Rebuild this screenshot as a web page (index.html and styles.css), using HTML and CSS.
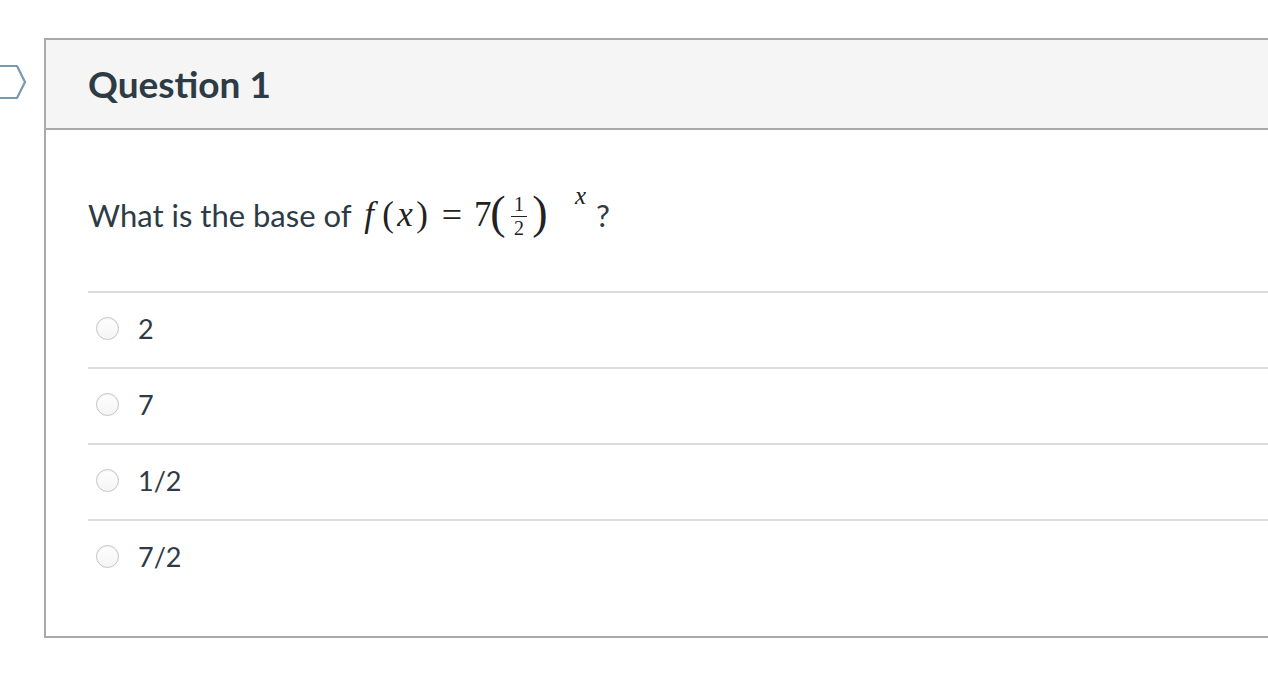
FILE: index.html
```html
<!DOCTYPE html>
<html>
<head>
<meta charset="utf-8">
<link rel="stylesheet" href="styles.css">
</head>
<body>
<div class="page">
  <div class="gutter">
    <svg class="flag" width="30" height="36" viewBox="0 0 30 36">
      <path d="M-4 2 H17 L25 18 L17 34 H-4" fill="none" stroke="#7a97b0" stroke-width="2.2" stroke-linejoin="round"/>
    </svg>
  </div>
  <div class="card">
    <div class="card-header">
      <h2 class="title">Question 1</h2>
    </div>
    <div class="card-body">
      <p class="question"><span class="qtext">What is the base of</span><span class="math"><span class="m mi f">f</span><span class="m lp">(</span><span class="m mi x">x</span><span class="m rp">)</span><span class="m eq">=</span><span class="m seven">7</span><span class="m bigp">(</span><span class="m frac"><span class="num">1</span><span class="den">2</span></span><span class="m bigp">)</span><span class="m sup">x</span></span><span class="qmark">?</span></p>
      <ul class="answers">
        <li class="answer"><span class="radio"></span><span class="label">2</span></li>
        <li class="answer"><span class="radio"></span><span class="label">7</span></li>
        <li class="answer"><span class="radio"></span><span class="label">1/2</span></li>
        <li class="answer"><span class="radio"></span><span class="label">7/2</span></li>
      </ul>
    </div>
  </div>
</div>
</body>
</html>
```

FILE: styles.css
```css
html, body {
  margin: 0;
  padding: 0;
  background: #ffffff;
}
body {
  font-family: Lato, "Liberation Sans", sans-serif;
  color: #2d3b45;
  overflow: hidden;
}
.page {
  display: flex;
  align-items: flex-start;
  width: 1268px;
}
.gutter {
  width: 44px;
  flex: none;
  padding-top: 64px;
}
.flag {
  display: block;
}
.card {
  flex: 1;
  margin-top: 38px;
  border: 2px solid #aaaaaa;
  border-right: none;
}
.card-header {
  height: 88px;
  background: #f5f5f5;
  border-bottom: 2px solid #aaaaaa;
  display: flex;
  align-items: center;
  padding-left: 42px;
}
.title {
  margin: 0;
  font-size: 37px;
  font-weight: 700;
  color: #2d3b45;
  line-height: 1;
  position: relative;
  top: -1px;
}
.card-body {
  padding: 63px 0 41px 42px;
}
.question {
  margin: 0;
  font-size: 31px;
  line-height: 44px;
  height: 98px;
  display: flex;
  align-items: flex-start;
  white-space: nowrap;
}
.qtext {
  width: 270px;
}
.math {
  font-family: "Liberation Serif", "DejaVu Serif", serif;
  font-size: 35px;
  display: flex;
  align-items: center;
  height: 44px;
  color: #222222;
}
.m {
  display: block;
  text-align: center;
  flex: none;
}
.mi {
  font-style: italic;
}
.f {
  width: 22px;
}
.lp {
  width: 16px;
}
.x {
  width: 18px;
}
.rp {
  width: 16px;
}
.eq {
  width: 44px;
  font-size: 36px;
}
.seven {
  width: 16px;
}
.bigp {
  width: 16px;
  font-size: 46px;
  line-height: 50px;
  position: relative;
  top: -2px;
}
.frac {
  width: 26px;
  display: flex;
  flex-direction: column;
  align-items: center;
  font-size: 20px;
  line-height: 23px;
  position: relative;
  top: 1px;
}
.num {
  border-bottom: 1px solid #222222;
  padding: 0 3px;
}
.sup {
  width: 40px;
  text-align: right;
  padding-right: 2px;
  box-sizing: border-box;
  font-style: italic;
  font-size: 25px;
  align-self: flex-start;
  line-height: 1;
  margin-top: -10px;
}
.qmark {
  margin-left: 8px;
}
.answers {
  list-style: none;
  margin: 0;
  padding: 0;
}
.answer {
  height: 76px;
  border-top: 2px solid #dddddd;
  display: flex;
  align-items: center;
  box-sizing: border-box;
  padding-left: 8px;
  padding-bottom: 3px;
}
.radio {
  width: 21px;
  height: 21px;
  border-radius: 50%;
  border: 1px solid #c4c4c4;
  background: linear-gradient(#ffffff, #f4f4f4);
  box-shadow: inset 0 1px 1px rgba(0,0,0,0.06);
  flex: none;
  margin-right: 19px;
}
.label {
  font-size: 27px;
  color: #2d3b45;
}
```
